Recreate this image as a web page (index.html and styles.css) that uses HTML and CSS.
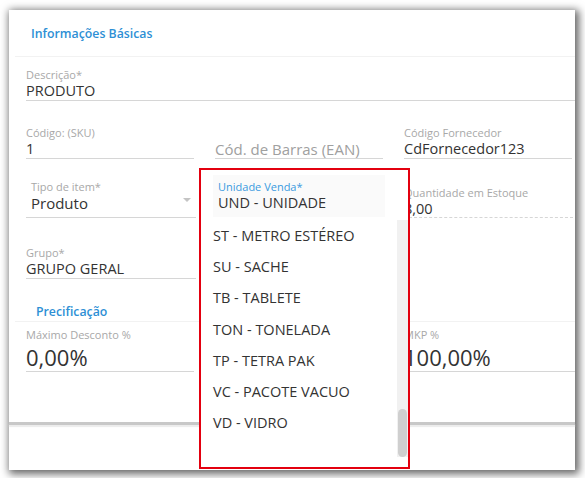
FILE: index.html
```html
<!DOCTYPE html>
<html lang="pt">
<head>
<meta charset="utf-8">
<link rel="stylesheet" href="styles.css">
</head>
<body>
<div class="card">
  <div class="section-head first"><span>Informações Básicas</span></div>
  <div class="fields">
    <div class="field desc">
      <div class="lbl">Descrição*</div>
      <div class="val">PRODUTO</div>
    </div>
    <div class="grid row-code">
      <div class="field">
        <div class="lbl">Código: (SKU)</div>
        <div class="val">1</div>
      </div>
      <div class="field placeholder">
        <div class="lbl">&nbsp;</div>
        <div class="val">Cód. de Barras (EAN)</div>
      </div>
      <div class="field forn">
        <div class="lbl">Código Fornecedor</div>
        <div class="val">CdFornecedor123</div>
      </div>
    </div>
    <div class="grid row-tipo">
      <div class="field select">
        <div class="lbl">Tipo de item*</div>
        <div class="val">Produto</div>
        <span class="arrow"></span>
      </div>
      <div class="field blank"></div>
      <div class="field dashed">
        <div class="lbl">Quantidade em Estoque</div>
        <div class="val">8,00</div>
      </div>
    </div>
    <div class="grid row-grupo">
      <div class="field">
        <div class="lbl">Grupo*</div>
        <div class="val">GRUPO GERAL</div>
      </div>
    </div>
  </div>
  <div class="section-head second"><span>Precificação</span></div>
  <div class="fields">
    <div class="grid row-preco">
      <div class="field big">
        <div class="lbl">Máximo Desconto %</div>
        <div class="val">0,00%</div>
      </div>
      <div class="field blank"></div>
      <div class="field big">
        <div class="lbl">MKP %</div>
        <div class="val">100,00%</div>
      </div>
    </div>
  </div>
  <div class="footer"></div>

  <div class="dropdown">
    <div class="dd-head">
      <div class="dd-lbl">Unidade Venda*</div>
      <div class="dd-val">UND - UNIDADE</div>
    </div>
    <div class="dd-body">
      <ul class="dd-list">
        <li>ST - METRO ESTÉREO</li>
        <li>SU - SACHE</li>
        <li>TB - TABLETE</li>
        <li>TON - TONELADA</li>
        <li>TP - TETRA PAK</li>
        <li>VC - PACOTE VACUO</li>
        <li>VD - VIDRO</li>
      </ul>
      <div class="track"><div class="thumb"></div></div>
    </div>
  </div>
</div>
</body>
</html>
```

FILE: styles.css
```css
* { box-sizing: border-box; }
html, body { margin: 0; padding: 0; background: #ffffff; }
body {
  font-family: "Open Sans", "Noto Sans", sans-serif;
  color: #333;
  width: 585px;
  height: 478px;
  overflow: hidden;
}
.card {
  position: relative;
  margin: 10px 0 0 9px;
  width: 566px;
  height: 460px;
  background: #fff;
  box-shadow: 2px 2px 8px 2px rgba(0, 0, 0, 0.6);
}
.section-head {
  margin-left: 6px;
  border-bottom: 1px solid #f2f2f2;
  color: #2d8fd5;
  font-weight: 600;
  font-size: 12.3px;
}
.section-head.first {
  height: 47px;
  padding: 15px 0 0 16px;
  line-height: 18px;
}
.section-head.second {
  height: 43px;
  padding: 24px 0 0 21px;
  line-height: 18px;
}
.fields { padding-left: 17px; }
.field { border-bottom: 1px solid #d6d6d6; position: relative; }
.lbl {
  font-size: 11px;
  line-height: 14px;
  color: #a8a8a8;
}
.val {
  font-size: 14.5px;
  line-height: 18px;
  color: #333;
}
.desc { margin-top: 11px; height: 33px; }
.grid {
  display: grid;
  grid-template-columns: 168px 168px 1fr;
  column-gap: 21px;
}
.row-code { margin-top: 25px; }
.row-code .field { height: 33px; }
.placeholder .val { color: #a0a0a0; font-size: 15px; }
.forn { margin-right: 3px; }
.row-tipo { margin-top: 21px; }
.row-tipo .field { height: 38px; }
.select { margin-right: -2px; }
.select .lbl, .select .val { padding-left: 5px; }
.select .val { font-size: 15px; }
.arrow {
  position: absolute;
  right: 5px;
  top: 18px;
  width: 0; height: 0;
  border-left: 4px solid transparent;
  border-right: 4px solid transparent;
  border-top: 4px solid #c4c4c4;
}
.blank { border-bottom: none; }
.dashed { border-bottom: 1px dashed #d6d6d6; margin-right: 2px; }
.dashed .lbl { padding-top: 6px; }
.row-grupo { margin-top: 28px; }
.row-grupo .field { height: 33px; margin-right: -2px; }
.row-preco { margin-top: 6px; }
.big { height: 44px; }
.big .lbl { line-height: 14px; }
.big .val { font-size: 22px; line-height: 24px; margin-top: 3px; }
.footer {
  position: absolute;
  left: 0; right: 0;
  top: 412px;
  height: 3px;
  background: #c8c8c8;
  box-shadow: 0 2px 1px #ececec;
}
.dropdown {
  position: absolute;
  left: 190px;
  top: 158px;
  width: 211px;
  height: 301px;
  border: 2px solid #e3000f;
  background: #fff;
}
.dd-head {
  margin: 5px 23px 0 12px;
  height: 42px;
  background: #fafafa;
  padding: 5px 0 0 5px;
}
.dd-lbl { font-size: 11px; line-height: 14px; color: #3a9be0; }
.dd-val { font-size: 14.5px; line-height: 18px; color: #333; }
.dd-body {
  display: flex;
  justify-content: space-between;
  height: 246px;
}
.dd-list {
  list-style: none;
  margin: 0;
  padding: 3px 0 0 12px;
}
.dd-list li {
  font-size: 14.5px;
  line-height: 31.2px;
  color: #333;
  white-space: nowrap;
}
.track {
  width: 11px;
  margin: 3px 0 6px;
  background: #f1f1f1;
  position: relative;
}
.thumb {
  position: absolute;
  left: 1px; right: 1px;
  bottom: 0;
  height: 48px;
  background: #cfcfcf;
  border-radius: 5px;
}
```
